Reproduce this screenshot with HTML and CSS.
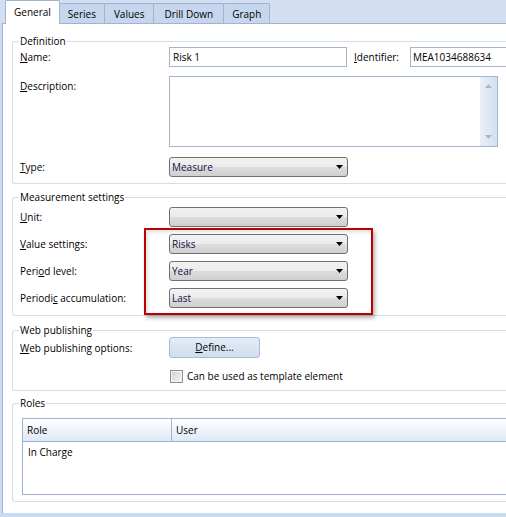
FILE: index.html
```html
<!DOCTYPE html>
<html lang="en">
<head>
    <meta charset="UTF-8">
    <title>Measure</title>
    <link rel="stylesheet" href="styles.css">
</head>
<body>
    <div id="tabs">
        <div class="tab active">General</div>
        <div class="tab">Series</div>
        <div class="tab">Values</div>
        <div class="tab">Drill Down</div>
        <div class="tab">Graph</div>
    </div>

    <div id="page">
        <fieldset class="group" id="definition">
            <legend>Definition</legend>
            <div class="row first">
                <label class="caption"><u>N</u>ame:</label>
                <div class="textbox name">Risk 1</div>
                <label class="ident-caption"><u>I</u>dentifier:</label>
                <div class="textbox ident">MEA1034688634</div>
            </div>
            <div class="row top">
                <label class="caption"><u>D</u>escription:</label>
                <div class="memo">
                    <div class="scrollbar">
                        <svg width="7" height="4" viewBox="0 0 7 4"><polygon points="0,4 7,4 3.5,0" fill="#a7b7cc"/></svg>
                        <svg width="7" height="4" viewBox="0 0 7 4"><polygon points="0,0 7,0 3.5,4" fill="#a7b7cc"/></svg>
                    </div>
                </div>
            </div>
            <div class="row gap10">
                <label class="caption"><u>T</u>ype:</label>
                <div class="combo"><span>Measure</span><svg width="7" height="4" viewBox="0 0 7 4"><polygon points="0,0 7,0 3.5,4" fill="#000"/></svg></div>
            </div>
        </fieldset>

        <fieldset class="group" id="measurement">
            <legend>Measurement settings</legend>
            <div class="row first">
                <label class="caption"><u>U</u>nit:</label>
                <div class="combo"><span></span><svg width="7" height="4" viewBox="0 0 7 4"><polygon points="0,0 7,0 3.5,4" fill="#000"/></svg></div>
            </div>
            <div class="row gap7">
                <label class="caption"><u>V</u>alue settings:</label>
                <div class="combo"><span>Risks</span><svg width="7" height="4" viewBox="0 0 7 4"><polygon points="0,0 7,0 3.5,4" fill="#000"/></svg></div>
            </div>
            <div class="row gap7">
                <label class="caption">Peri<u>o</u>d level:</label>
                <div class="combo"><span>Year</span><svg width="7" height="4" viewBox="0 0 7 4"><polygon points="0,0 7,0 3.5,4" fill="#000"/></svg></div>
            </div>
            <div class="row gap7">
                <label class="caption">Periodi<u>c</u> accumulation:</label>
                <div class="combo"><span>Last</span><svg width="7" height="4" viewBox="0 0 7 4"><polygon points="0,0 7,0 3.5,4" fill="#000"/></svg></div>
            </div>
        </fieldset>

        <fieldset class="group" id="web">
            <legend>Web publishing</legend>
            <div class="row">
                <label class="caption"><u>W</u>eb publishing options:</label>
                <div class="button"><u>D</u>efine...</div>
            </div>
            <div class="row check-row">
                <div class="checkbox"></div>
                <span>Can be used as template element</span>
            </div>
        </fieldset>

        <fieldset class="group" id="roles">
            <legend>Roles</legend>
            <div class="grid">
                <div class="grid-head">
                    <div class="col role">Role</div>
                    <div class="col">User</div>
                </div>
                <div class="grid-row">
                    <div class="col role">In Charge</div>
                    <div class="col"></div>
                </div>
            </div>
        </fieldset>
    </div>

    <div id="highlight"></div>
</body>
</html>
```

FILE: styles.css
```css
body {
    margin: 0;
    width: 506px;
    height: 517px;
    overflow: hidden;
    position: relative;
    background-color: #cbdaee;
    font-family: "Open Sans", "Liberation Sans", sans-serif;
    font-size: 10px;
    color: #000;
}

#tabs {
    height: 23px;
    display: flex;
    align-items: flex-end;
    padding-left: 5px;
    background-color: #d3dff0;
}

.tab {
    height: 19px;
    line-height: 20px;
    padding: 0 8px;
    margin-right: -1px;
    border: 1px solid #9fb4d2;
    border-bottom: none;
    border-radius: 2px 2px 0 0;
    background-color: #c6d6ed;
}

.tab:nth-child(3) {
    padding: 0 9px;
}

.tab:nth-child(4) {
    padding: 0 10px;
}

.tab.active {
    position: relative;
    z-index: 1;
    height: 23px;
    line-height: 22px;
    margin-bottom: -1px;
    background-color: #fff;
}

#page {
    width: 494px;
    height: 478px;
    margin-left: 2px;
    padding: 11px 0 0 9px;
    background-color: #fff;
    border-top: 1px solid #9fb4d2;
    border-left: 1px solid #9fb4d2;
}

.group {
    margin: 0;
    padding: 0 0 6px 7px;
    border: 1px solid #d5dee6;
    border-right: none;
    border-radius: 3px 0 0 3px;
}

.group legend {
    padding: 0 1px;
    margin-left: -1px;
    line-height: 13px;
}

#measurement {
    margin-top: 7px;
    padding-bottom: 7px;
}

#web {
    margin-top: 8px;
    padding-bottom: 7px;
}

#roles {
    margin-top: 6px;
    padding-bottom: 6px;
}

.row {
    display: flex;
    align-items: center;
}

.row.first {
    margin-top: -1px;
}

#measurement .row.first {
    margin-top: 3px;
}

.row.top {
    align-items: flex-start;
    margin-top: 9px;
}

.row.top .caption {
    padding-top: 3px;
}

.row.gap10 {
    margin-top: 10px;
}

.row.gap7 {
    margin-top: 7px;
}

.caption {
    width: 149px;
    flex-shrink: 0;
}

.textbox {
    height: 18px;
    line-height: 18px;
    padding: 0 3px;
    border: 1px solid #a5b5cc;
    background-color: #fff;
}

.textbox.name {
    width: 170px;
}

.ident-caption {
    margin-left: 7px;
    width: 56px;
}

.textbox.ident {
    flex: 1;
    padding-left: 2px;
    border-right: none;
    white-space: nowrap;
    overflow: hidden;
}

.memo {
    width: 327px;
    height: 69px;
    border: 1px solid #a5b5cc;
    display: flex;
    justify-content: flex-end;
}

.scrollbar {
    width: 17px;
    height: 69px;
    background: linear-gradient(to right, #e9eff8, #d3e0f0);
    display: flex;
    flex-direction: column;
    justify-content: space-between;
    align-items: center;
    padding: 7px 0;
    box-sizing: border-box;
}

.combo {
    width: 179px;
    height: 20px;
    box-sizing: border-box;
    border: 1px solid #707070;
    border-radius: 3px;
    background: linear-gradient(#f2f2f2, #ebebeb 50%, #dddddd 51%, #cfcfcf);
    display: flex;
    align-items: center;
    justify-content: space-between;
    padding: 0 4px 0 2px;
    color: #10104a;
}

.button {
    width: 91px;
    height: 21px;
    box-sizing: border-box;
    line-height: 19px;
    text-align: center;
    border: 1px solid #a9bcd6;
    border-radius: 3px;
    background: linear-gradient(#e4ecf7, #d0ddee);
}

.check-row {
    margin-top: 11px;
    margin-left: 150px;
}

.checkbox {
    width: 11px;
    height: 11px;
    border: 1px solid #8e8f8f;
    background: linear-gradient(135deg, #cdd0d5, #f7f7f7);
    box-shadow: inset 0 0 0 1px #f3f3f3;
    margin-right: 4px;
}

.grid {
    margin: 8px 0 0 2px;
    height: 75px;
    border: 1px solid #9fb1cb;
    border-right: none;
    background-color: #fff;
}

.grid-head {
    display: flex;
    height: 22px;
    line-height: 22px;
    border-bottom: 1px solid #9fb1cb;
    background: linear-gradient(#ffffff, #dfe8f5);
}

.grid-row {
    display: flex;
    line-height: 18px;
    padding-top: 1px;
}

.col {
    padding-left: 4px;
}

.col.role {
    width: 144px;
}

.grid-head .col.role {
    border-right: 1px solid #9fb1cb;
}

.grid-row .col.role {
    padding-left: 5px;
}

#highlight {
    position: absolute;
    left: 144px;
    top: 228px;
    width: 229px;
    height: 87px;
    box-sizing: border-box;
    border: 2px solid #c00000;
    box-shadow: 2px 3px 4px rgba(0, 0, 0, 0.3), inset 2px 2px 4px rgba(0, 0, 0, 0.12);
}
```
